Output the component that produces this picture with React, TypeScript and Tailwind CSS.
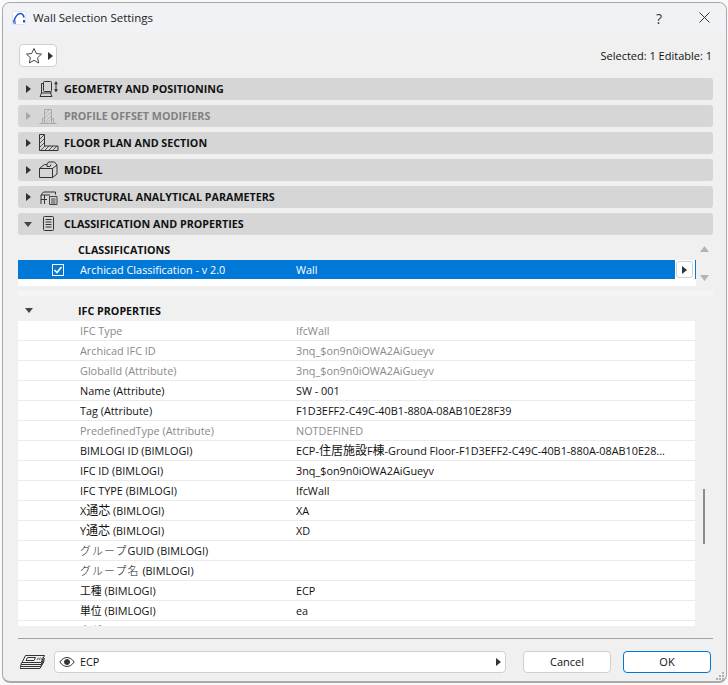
import React from "react";

const font = { fontFamily: '"Open Sans","Noto Sans CJK JP",sans-serif' };

const Tri = ({ dir = "right", color = "#333", className = "" }: { dir?: "right" | "down" | "up"; color?: string; className?: string }) => {
  const pts = dir === "right" ? "0,0 5,4 0,8" : dir === "down" ? "0,0 8,0 4,5" : "0,5 8,5 4,0";
  const w = dir === "right" ? 5 : 8;
  const h = dir === "right" ? 8 : 5;
  return (
    <svg width={w} height={h} viewBox={`0 0 ${w} ${h}`} className={className} preserveAspectRatio="none">
      <polygon points={pts} fill={color} />
    </svg>
  );
};

const GeometryIcon = () => (
  <svg width="20" height="18" viewBox="0 0 20 18" fill="none" stroke="#333" strokeWidth="1">
    <rect x="4.500" y="1.500" width="8" height="10" rx="1" />
    <path d="M4.500 3.500h-2v9.500h9.500v-1.500" />
    <path d="M2.500 13l-1.500 3.500h12l-1.500-3.500" />
    <path d="M17 3v7.500" />
    <path d="M15.500 4l1.500-2.500 1.500 2.500zM15.500 9.500l1.500 2.500 1.500-2.500z" fill="#333" strokeWidth="0.500" />
  </svg>
);
const ProfileIcon = () => (
  <svg width="20" height="18" viewBox="0 0 20 18" fill="none" stroke="#a8a8a8" strokeWidth="1">
    <path d="M0.500 16.500h17" />
    <path d="M5.500 16.500v-5h-2v5M5.500 2.500h7v14h-7zM12.500 11.500h2v5" />
    <path d="M6 7l4.500-4.500M6 11l6-6M6 15l6-6M8 16l4-4" strokeWidth="0.700" />
  </svg>
);
const FloorIcon = () => (
  <svg width="20" height="18" viewBox="0 0 20 18" fill="none" stroke="#333" strokeWidth="1">
    <path d="M0.500 0.500h5v11.500h13.500v4.500h-18.500z" />
    <path d="M1 5l4-4M1 9l4-4M1 13l4-4M2 16l4-4M6 16l4-4M10 16l4-4M14 16l4-4" strokeWidth="0.800" />
  </svg>
);
const ModelIcon = () => (
  <svg width="20" height="18" viewBox="0 0 20 18" fill="none" stroke="#333" strokeWidth="1">
    <path d="M0.500 7.500h13v9h-13zM0.500 7.500l5-4h2.500M13.500 7.500l4.500-3.500v9l-4.500 3.500" />
    <path d="M8 3.500l1.500-2.500h6l2.500 3M8 3.500v2h3l1-2" />
  </svg>
);
const StructuralIcon = () => (
  <svg width="20" height="18" viewBox="0 0 20 18" fill="none" stroke="#333" strokeWidth="1">
    <path d="M2 16v-9l2.500-3h12v2.500M2 7h9M2 11.500h6M5.500 7v9" />
    <path d="M10.500 8.500h7.500v8h-7.500zM12 11h4.500M12 13h4.500M12 15h4.500" strokeWidth="0.900" />
  </svg>
);
const ClassIcon = () => (
  <svg width="20" height="18" viewBox="0 0 20 18" fill="none" stroke="#333" strokeWidth="1">
    <rect x="4.500" y="1.500" width="10" height="14" rx="1" />
    <path d="M6.500 4.500h6M6.500 7h6M6.500 9.500h6M6.500 12h6" />
  </svg>
);

const LayerIcon = () => (
  <svg width="26" height="15" viewBox="0 0 26 15" fill="none" stroke="#333" strokeWidth="1">
    <path d="M5.500 0.500h19l-3.500 7h-19z" />
    <path d="M7.500 2.500h8l-1.500 3h-8z" />
    <path d="M17 5l1.500-2.500M19 5l1.500-2.500M21 5l1.500-2.500" strokeWidth="0.800" />
    <path d="M1.500 7.500l-.5 2h20l3.500-6.500M1 9.500l-.5 2h20l4-7M.5 11.500l-.5 2h20l4-7" />
  </svg>
);

const sections = [
  { label: "GEOMETRY AND POSITIONING", icon: <GeometryIcon /> },
  { label: "PROFILE OFFSET MODIFIERS", icon: <ProfileIcon />, disabled: true },
  { label: "FLOOR PLAN AND SECTION", icon: <FloorIcon /> },
  { label: "MODEL", icon: <ModelIcon /> },
  { label: "STRUCTURAL ANALYTICAL PARAMETERS", icon: <StructuralIcon /> },
  { label: "CLASSIFICATION AND PROPERTIES", icon: <ClassIcon />, open: true },
];

const Wide = ({ children }: { children: React.ReactNode }) => (
  <span className="tracking-[1.2px] font-light">{children}</span>
);
const Cjk = ({ children }: { children: React.ReactNode }) => <span className="text-[12px]">{children}</span>;

const rows: [React.ReactNode, React.ReactNode, boolean?][] = [
  ["IFC Type", "IfcWall", true],
  ["Archicad IFC ID", "3nq_$on9n0iOWA2AiGueyv", true],
  ["GlobalId (Attribute)", "3nq_$on9n0iOWA2AiGueyv", true],
  ["Name (Attribute)", "SW - 001"],
  ["Tag (Attribute)", "F1D3EFF2-C49C-40B1-880A-08AB10E28F39"],
  ["PredefinedType (Attribute)", "NOTDEFINED", true],
  ["BIMLOGI ID (BIMLOGI)", <>ECP-<Cjk>住居施設</Cjk>F<Cjk>棟</Cjk>-Ground Floor-F1D3EFF2-C49C-40B1-880A-08AB10E28...</>],
  ["IFC ID (BIMLOGI)", "3nq_$on9n0iOWA2AiGueyv"],
  ["IFC TYPE (BIMLOGI)", "IfcWall"],
  [<>X<Cjk>通芯</Cjk> (BIMLOGI)</>, "XA"],
  [<>Y<Cjk>通芯</Cjk> (BIMLOGI)</>, "XD"],
  [<><Wide>グループ</Wide>GUID (BIMLOGI)</>, ""],
  [<><Wide>グループ名</Wide> (BIMLOGI)</>, ""],
  ["工種 (BIMLOGI)", "ECP"],
  ["単位 (BIMLOGI)", "ea"],
  ["タグ", ""],
];

export default function App() {
  return (
    <div className="w-[728px] h-[685px] bg-[#f9f9f9] overflow-hidden pl-[2px] pt-[2px] text-[10.85px] text-[#111]" style={font}>
      <div className="w-[725px] h-[681px] bg-[#f0f0f0] border border-[#a9a9a9] border-b-[2px] rounded-[8px] overflow-hidden flex flex-col relative">
        {/* title bar */}
        <div className="h-[30px] shrink-0 bg-[#f0f2f6] flex items-center pl-[9px]">
          <svg width="14" height="14" viewBox="0 0 14 14" fill="none">
            <rect x="0.500" y="0.500" width="13" height="13" rx="1" fill="#fff" stroke="#dfe3ec" />
            <path d="M1.500 11.500C3 6 5.500 2.500 8.500 2.500c2 0 3 1.500 3.500 4" stroke="#2b50c8" strokeWidth="1.600" />
            <path d="M1 13l3-4v4z" fill="#7d97e6" />
            <rect x="11" y="9" width="2" height="2.500" fill="#2b50c8" />
          </svg>
          <span className="ml-[7px] text-[11.500px] text-[#222]">Wall Selection Settings</span>
          <span className="ml-auto mr-[37px] text-[14px] font-medium text-[#333]">?</span>
          <svg width="11" height="11" viewBox="0 0 11 11" className="mr-[16px] mb-[2px]" stroke="#333" strokeWidth="1">
            <path d="M0.500 0.500l10 10M10.500 0.500l-10 10" />
          </svg>
        </div>

        {/* toolbar */}
        <div className="h-[45px] shrink-0 flex items-start justify-between pl-[16px] pr-[14px] pt-[11px]">
          <div className="w-[38px] h-[23px] bg-white border border-[#d0d0d0] rounded-[4px] flex items-center pl-[5px] gap-[5px]">
            <svg width="18" height="18" viewBox="0 0 18 18" fill="none" stroke="#444" strokeWidth="1">
              <path d="M9 1.500l2.300 5 5.200.6-3.900 3.600 1.100 5.300L9 13.300l-4.700 2.700 1.100-5.300L1.500 7.100l5.200-.6z" />
            </svg>
            <Tri />
          </div>
          <span className="pt-[5px] text-[11px] leading-[14px]">Selected: 1 Editable: 1</span>
        </div>

        <div className="pl-[15px] pr-[13px] flex flex-col flex-1 min-h-0">
          {/* section headers */}
          <div className="flex flex-col gap-[5px]">
            {sections.map((s) => (
              <div key={s.label} className="h-[22px] bg-[#d6d6d6] rounded-[3px] flex items-center">
                <span className="w-[20px] flex justify-center">
                  {s.open ? <Tri dir="down" color="#444" /> : <Tri color={s.disabled ? "#a8a8a8" : "#333"} />}
                </span>
                <span className="w-[20px] ml-[1px] flex items-center justify-center">{s.icon}</span>
                <span className={`ml-[5px] text-[10.730px] font-bold ${s.disabled ? "text-[#808080]" : "text-[#111]"}`}>{s.label}</span>
              </div>
            ))}
          </div>

          {/* classifications */}
          <div className="flex mt-[5px]">
            <div className="w-[678px] h-[46px] bg-white flex flex-col">
              <div className="h-[20px] bg-[#f0f0f0] pl-[60px] flex items-center font-bold text-[10.730px]">CLASSIFICATIONS</div>
              <div className="h-[19px] flex items-stretch">
                <div className="w-[657px] bg-[#0078d7] text-white flex items-center">
                  <span className="ml-[34px] w-[12px] h-[12px] border border-white bg-[#0078d7] flex items-center justify-center">
                    <svg width="10" height="10" viewBox="0 0 10 10" fill="none" stroke="#fff" strokeWidth="1.600">
                      <path d="M1.500 5l2.500 2.500 4.500-5.500" />
                    </svg>
                  </span>
                  <span className="w-[216px] ml-[16px] pt-[1px]">Archicad Classification - v 2.0</span>
                  <span className="pt-[1px]">Wall</span>
                </div>
                <div className="w-[19px] ml-[1px] flex items-center">
                  <span className="w-[17px] h-[17px] bg-white border border-[#d0d0d0] rounded-[3px] flex items-center justify-center">
                    <Tri />
                  </span>
                </div>
                <div className="w-[1px] bg-[#0078d7]" />
              </div>
            </div>
            <div className="h-[46px] flex flex-col items-center pt-[6px] gap-[23px] grow">
              <Tri dir="up" color="#b4b4b4" className="w-[9px] h-[6px]" />
              <Tri dir="down" color="#b4b4b4" className="w-[9px] h-[6px]" />
            </div>
          </div>

          <div className="h-[5px] mt-[5px] bg-[#f5f5f5]" />

          {/* IFC properties */}
          <div className="flex mt-[5px]">
            <div className="w-[677px] h-[325px] bg-white overflow-hidden">
              <div className="h-[20px] bg-[#f0f0f0] flex items-center font-bold text-[10.730px]">
                <span className="w-[22px] flex justify-center mr-[38px] pb-[2px]">
                  <Tri dir="down" color="#444" />
                </span>
                IFC PROPERTIES
              </div>
              {rows.map(([k, v, dim], i) => (
                <div key={i} className={`h-[20px] flex items-center pt-[1px] border-b border-[#ebebeb] ${dim ? "text-[#8a8a8a]" : "text-[#111]"}`}>
                  <span className="w-[278px] pl-[62px] whitespace-nowrap">{k}</span>
                  <span className="whitespace-nowrap">{v}</span>
                </div>
              ))}
            </div>
            <div className="grow flex justify-center pt-[188px]">
              <div className="w-[2px] h-[55px] bg-[#8c8c8c]" />
            </div>
          </div>

          <div className="h-[1px] mt-[12px] bg-[#a0a0a0]" />

          {/* footer */}
          <div className="flex items-center mt-[12px] h-[22px]">
            <span className="w-[36px] flex pl-[2px]"><LayerIcon /></span>
            <div className="w-[452px] h-[22px] bg-white border border-[#d0d0d0] rounded-[4px] flex items-center pl-[4px] pr-[4px]">
              <svg width="16" height="10" viewBox="0 0 16 10" fill="none" stroke="#333" strokeWidth="1">
                <path d="M0.800 5C3 1.800 5.500 0.500 8 0.500S13 1.800 15.200 5C13 8.200 10.500 9.500 8 9.500S3 8.200.8 5z" />
                <circle cx="8" cy="5" r="2.500" fill="#333" />
              </svg>
              <span className="ml-[5px]">ECP</span>
              <Tri className="ml-auto" />
            </div>
            <button className="w-[88px] h-[22px] ml-[17px] bg-white border border-[#d0d0d0] rounded-[4px] text-[11px]">Cancel</button>
            <button className="w-[88px] h-[22px] ml-[12px] bg-white border border-[#0078d7] rounded-[4px] text-[11px]">OK</button>
          </div>
        </div>
        <svg width="10" height="10" viewBox="0 0 10 10" className="absolute right-[1px] bottom-[0px]" fill="#b0b0b0">
          <rect x="7" y="1" width="2" height="2" /><rect x="4" y="4" width="2" height="2" /><rect x="7" y="4" width="2" height="2" />
          <rect x="1" y="7" width="2" height="2" /><rect x="4" y="7" width="2" height="2" /><rect x="7" y="7" width="2" height="2" />
        </svg>
      </div>
    </div>
  );
}
